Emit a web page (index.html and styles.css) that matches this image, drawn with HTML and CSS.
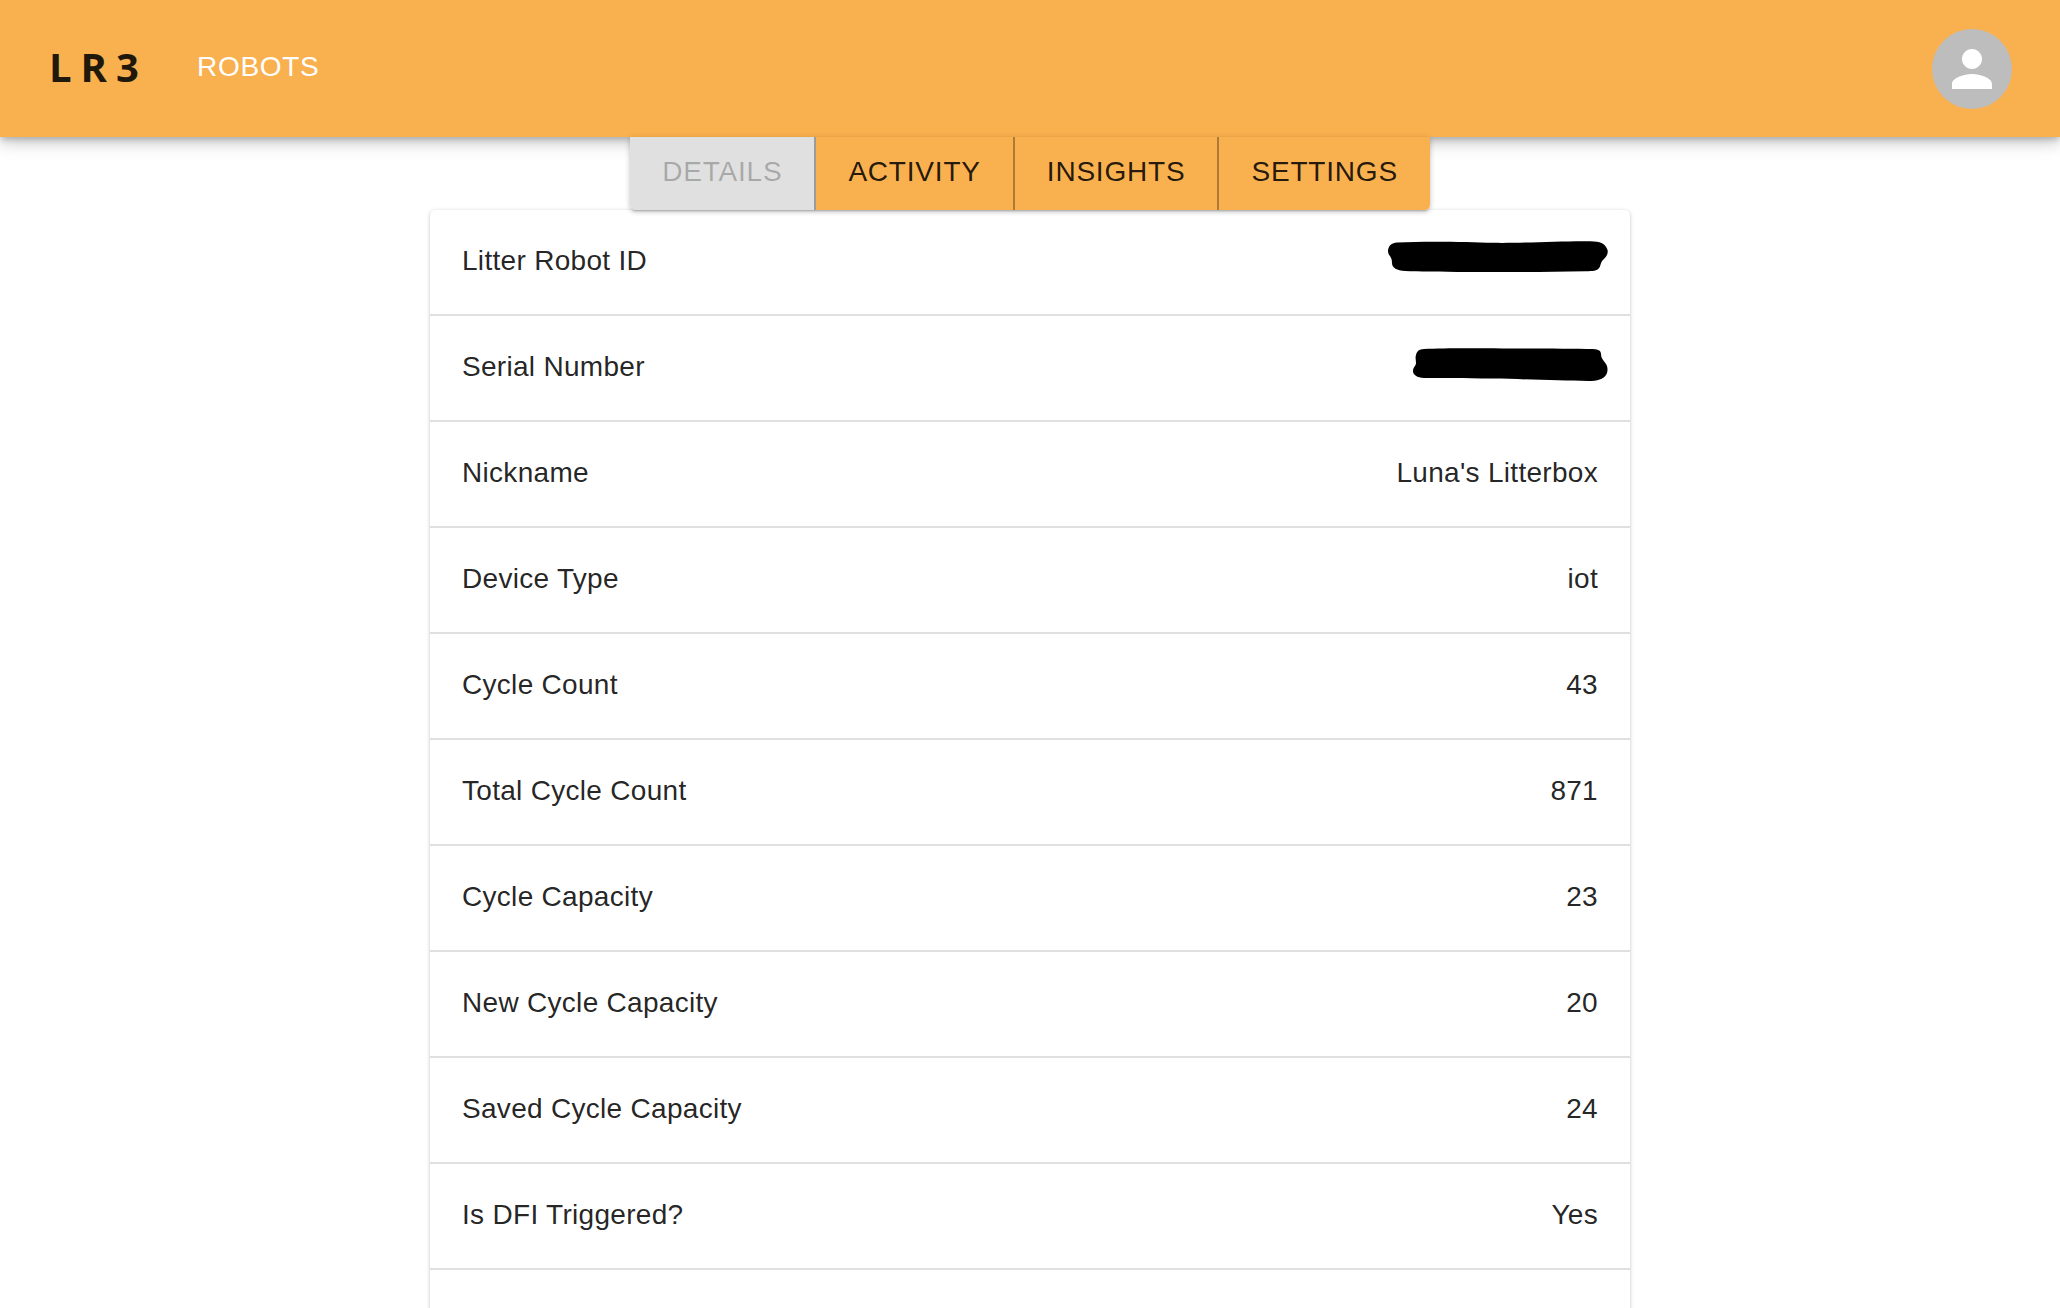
FILE: index.html
```html
<!DOCTYPE html>
<html>

	<head>
		<meta charset="UTF-8">
		<title>LR3</title>
		<link rel="stylesheet" href="styles.css">
	</head>

	<body>

		<header class="appBar">
			<div class="logo">LR3</div>
			<a class="navLink">ROBOTS</a>
			<div class="avatar">
				<svg viewBox="0 0 24 24" width="60" height="60">
					<path fill="#fff" d="M12 12c2.21 0 4-1.79 4-4s-1.79-4-4-4-4 1.79-4 4 1.79 4 4 4zm0 2c-2.67 0-8 1.34-8 4v2h16v-2c0-2.66-5.33-4-8-4z" />
				</svg>
			</div>
		</header>

		<div class="tabRow">
			<div class="tabs">
				<button class="tab tabOff">DETAILS</button>
				<button class="tab">ACTIVITY</button>
				<button class="tab">INSIGHTS</button>
				<button class="tab">SETTINGS</button>
			</div>
		</div>

		<div class="card">
			<div class="row">
				<span>Litter Robot ID</span>
				<svg class="scribble scribbleId" viewBox="0 0 220 32" width="220" height="32">
					<path d="M0 9C1 4 4 2 9 1.5C40 0 80 1 105 1.8C130 2.4 170 0 198 .2C210 .4 215 1 218 6C221 10 220 14 216 18C212 21 213 25 211 27C209 30 205 30 198 30.2C150 31 110 31.3 80 31C50 30.8 30 30.6 17 30C9 29.5 4 27 4 22C4 18 3 17 2 15C0 13 0 11 0 9Z" />
				</svg>
			</div>
			<div class="row">
				<span>Serial Number</span>
				<svg class="scribble scribbleSerial" viewBox="0 0 195 33" width="195" height="33">
					<path d="M3 7C4 3 6 1.3 11 1C30 0 60 .2 90 .4C120 .6 160 .6 180 1C186 1.3 188 3 188 6C188 10 190 12 193 16C195 19 195 24 193 27C190 31 185 33 175 33C150 33 110 31 80 30.6C50 30.2 25 30 11 30C4 29.6 0 27 0 23C0 19 3 18 3 15C3 12 2 10 3 7Z" />
				</svg>
			</div>
			<div class="row"><span>Nickname</span><span>Luna's Litterbox</span></div>
			<div class="row"><span>Device Type</span><span>iot</span></div>
			<div class="row"><span>Cycle Count</span><span>43</span></div>
			<div class="row"><span>Total Cycle Count</span><span>871</span></div>
			<div class="row"><span>Cycle Capacity</span><span>23</span></div>
			<div class="row"><span>New Cycle Capacity</span><span>20</span></div>
			<div class="row"><span>Saved Cycle Capacity</span><span>24</span></div>
			<div class="row"><span>Is DFI Triggered?</span><span>Yes</span></div>
			<div class="row"></div>
		</div>

	</body>

</html>
```

FILE: styles.css
```css
* {
	margin: 0px;
	padding: 0px;
	box-sizing: border-box;
}

html,
body {
	height: 100%;
	overflow: hidden;
}

body {
	background-color: #fff;
	font-family: "Liberation Sans", Arial, sans-serif;
	font-size: 28px;
	color: rgba(0, 0, 0, 0.87);
}

.appBar {
	position: relative;
	z-index: 2;
	display: flex;
	align-items: center;
	height: 137px;
	padding: 0 48px 0 49px;
	background-color: #f9b04f;
	box-shadow: 0 3px 6px -1px rgba(0, 0, 0, 0.2), 0 6px 13px 0 rgba(0, 0, 0, 0.14), 0 1px 24px 0 rgba(0, 0, 0, 0.12);
}

.logo {
	font-family: "Open Sans", sans-serif;
	font-size: 40px;
	font-weight: 700;
	letter-spacing: 9px;
	color: #21180c;
	width: 148px;
	margin-bottom: 4px;
}

.navLink {
	color: #fff;
	letter-spacing: 0.7px;
	margin-bottom: 3px;
}

.avatar {
	display: flex;
	align-items: center;
	justify-content: center;
	width: 80px;
	height: 80px;
	margin-left: auto;
	border-radius: 50%;
	background-color: #bdbdbd;
}

.tabRow {
	position: relative;
	z-index: 3;
	display: flex;
	justify-content: center;
}

.tabs {
	display: flex;
	height: 73px;
	border-radius: 0 0 5px 5px;
	box-shadow: 0 3px 2px -2px rgba(0, 0, 0, 0.2), 0 2px 4px 0 rgba(0, 0, 0, 0.14), 0 1px 7px 0 rgba(0, 0, 0, 0.12);
}

.tab {
	border: none;
	border-right: 2px solid rgba(0, 0, 0, 0.3);
	padding: 0 32px 4px;
	background-color: #f9b04f;
	font-family: inherit;
	font-size: 28px;
	letter-spacing: 0.8px;
	color: rgba(0, 0, 0, 0.87);
}

.tab:first-child {
	border-radius: 0 0 0 5px;
}

.tab:last-child {
	border-right: none;
	border-radius: 0 0 5px 0;
}

.tabOff {
	background-color: #e0e0e0;
	color: rgba(0, 0, 0, 0.26);
}

.card {
	position: relative;
	z-index: 1;
	width: 1200px;
	margin: 0 auto;
	border-radius: 5px;
	background-color: #fff;
	box-shadow: 0 2px 1px -1px rgba(0, 0, 0, 0.2), 0 1px 3px 0 rgba(0, 0, 0, 0.14), 0 1px 5px 0 rgba(0, 0, 0, 0.12);
}

.row {
	display: flex;
	align-items: center;
	justify-content: space-between;
	height: 106px;
	padding: 0 32px 2px;
	border-bottom: 2px solid #e0e0e0;
	letter-spacing: 0.3px;
}

.scribble {
	fill: #000;
	margin-right: -10px;
}

.scribbleId {
	margin-bottom: 9px;
}

.scribbleSerial {
	margin-bottom: 5px;
}
```
